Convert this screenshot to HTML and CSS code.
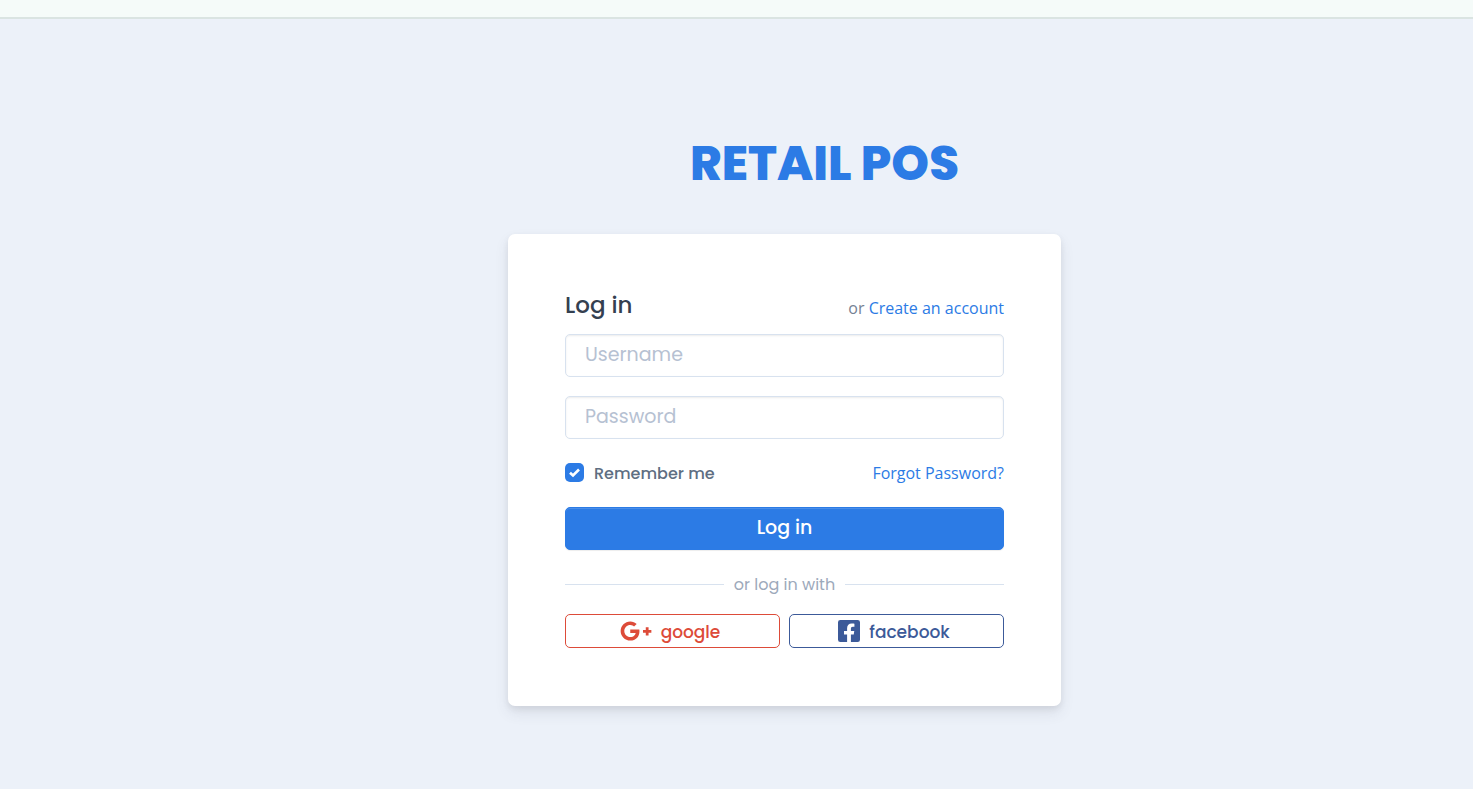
FILE: index.html
```html
<!DOCTYPE html>
<html lang="en">
<head>
<meta charset="utf-8">
<meta name="viewport" content="width=device-width, initial-scale=1">
<title>Retail POS - Log in</title>
<link rel="stylesheet" href="styles.css">
</head>
<body>
<div class="topbar"></div>
<main class="page">
  <h1 class="brand">RETAIL POS</h1>
  <form class="card">
    <div class="card-head">
      <h2 class="heading">Log in</h2>
      <p class="signup">or <a class="link" href="#">Create an account</a></p>
    </div>
    <input class="field" type="text" placeholder="Username" aria-label="Username">
    <input class="field" type="password" placeholder="Password" aria-label="Password">
    <div class="options">
      <label class="remember"><input class="check" type="checkbox" checked><span class="remember-text">Remember me</span></label>
      <a class="link" href="#">Forgot Password?</a>
    </div>
    <button class="submit" type="submit">Log in</button>
    <div class="divider"><span class="divider-text">or log in with</span></div>
    <div class="social">
      <button class="social-btn google" type="button">
        <svg class="icon-google" viewBox="0 0 640 512" aria-hidden="true"><path fill="currentColor" d="M386.061 228.496c1.834 9.692 3.143 19.384 3.143 31.956C389.204 370.205 315.599 448 204.8 448c-106.084 0-192-85.915-192-192s85.916-192 192-192c51.864 0 95.083 18.859 128.611 50.292l-52.126 50.03c-14.145-13.621-39.028-29.599-76.485-29.599-65.484 0-118.92 54.221-118.92 121.277 0 67.056 53.436 121.277 118.92 121.277 75.961 0 104.513-54.745 108.965-82.773H204.8v-66.009h181.261zm185.406 6.437V179.2h-56.001v55.733h-55.733v56.001h55.733v55.733h56.001v-55.733H627.2v-56.001h-55.733z"/></svg>
        <span class="social-text">google</span>
      </button>
      <button class="social-btn facebook" type="button">
        <svg class="icon-facebook" viewBox="0 0 448 512" aria-hidden="true"><path fill="currentColor" d="M400 32H48A48 48 0 0 0 0 80v352a48 48 0 0 0 48 48h137.250V327.690h-63V256h63v-54.640c0-62.150 37-96.480 93.670-96.480 27.140 0 55.520 4.840 55.520 4.840v61h-31.270c-30.810 0-40.420 19.120-40.420 38.730V256h68.780l-11 71.690h-57.780V480H400a48 48 0 0 0 48-48V80a48 48 0 0 0-48-48z"/></svg>
        <span class="social-text">facebook</span>
      </button>
    </div>
  </form>
</main>
</body>
</html>
```
FILE: styles.css
```css
* {
  box-sizing: border-box;
}

body {
  margin: 0;
  min-height: 100vh;
  background: #ecf1f9;
  color: #5e6e82;
  font: 16px/24px "Open Sans", sans-serif;
}

.topbar {
  height: 19px;
  background: #f5fbf9;
  border-bottom: 2px solid #dae4e2;
}

.page {
  display: flex;
  flex-direction: column;
  align-items: center;
  padding: 109px 0 40px 96px;
}

.brand {
  margin: 0 0 34px;
  padding-left: 80px;
  color: #2c7be5;
  font: 800 48px/72px Poppins, Inter, sans-serif;
}

.card {
  display: flex;
  flex-direction: column;
  width: 100%;
  max-width: 553px;
  padding: 56px 57px 58px;
  background: #fff;
  border-radius: 7px;
  box-shadow: 0 7px 14px 0 rgba(65, 69, 88, 0.1), 0 3px 6px 0 rgba(0, 0, 0, 0.07);
}

.card-head,
.options {
  display: flex;
  align-items: center;
  justify-content: space-between;
}

.card-head {
  margin-bottom: 14px;
}

.heading {
  margin: 0;
  color: #344050;
  font: 500 23px/30px Poppins, Inter, sans-serif;
}

.signup {
  margin: 0;
  padding-top: 6px;
  color: #748194;
}

.link {
  color: #2c7be5;
  text-decoration: none;
}

.field {
  width: 100%;
  height: 43px;
  margin: 0 0 19px;
  padding: 0 19px 2px;
  color: #344050;
  background: #fff;
  border: 1px solid #d8e2ef;
  border-radius: 5px;
  box-shadow: inset 0 1px 2px rgba(0, 0, 0, 0.075);
  font: 400 19px Poppins, Inter, sans-serif;
}

.field::placeholder {
  color: #b6c1d2;
  opacity: 1;
}

.options {
  margin: 1px 0 21px;
}

.remember {
  display: flex;
  align-items: center;
  gap: 10px;
  font: 500 16px/24px Poppins, Inter, sans-serif;
}

.remember-text {
  padding-top: 3px;
}

.check {
  appearance: none;
  width: 19px;
  height: 19px;
  margin: 0;
  border-radius: 5px;
  background: #fff;
  border: 1px solid #b6c1d2;
}

.check:checked {
  border: 0;
  background: #2c7be5 url("data:image/svg+xml,%3Csvg xmlns='http://www.w3.org/2000/svg' viewBox='0 0 19 19'%3E%3Cpath fill='none' stroke='white' stroke-width='2.600' d='m5 9.700 3 2.800 6-6'/%3E%3C/svg%3E") center / 100% no-repeat;
}

.submit {
  height: 43px;
  padding: 0 20px 2px;
  color: #fff;
  background: #2c7be5;
  border: 1px solid #2c7be5;
  border-radius: 5px;
  box-shadow: inset 0 1px 0 rgba(255, 255, 255, 0.15), 0 1px 1px rgba(0, 0, 0, 0.075);
  font: 500 19px Poppins, Inter, sans-serif;
}

.divider {
  display: flex;
  align-items: center;
  gap: 10px;
  margin: 21px 0 17px;
  color: #9da9bb;
  font: 400 16px/24px Poppins, Inter, sans-serif;
}

.divider-text {
  padding-top: 2px;
}

.divider::before,
.divider::after {
  content: "";
  flex: 1;
  height: 1px;
  background: #d8e2ef;
}

.social {
  display: grid;
  grid-template-columns: 1fr 1fr;
  gap: 9px;
}

.social-btn {
  display: flex;
  align-items: center;
  justify-content: center;
  gap: 9px;
  height: 34px;
  padding: 0 5px 1px 0;
  background: #fff;
  border: 1px solid currentColor;
  border-radius: 5px;
  font: 500 17px/24px Poppins, Inter, sans-serif;
}

.social-text {
  padding-top: 2px;
}

.google {
  color: #dd4b39;
}

.facebook {
  color: #3c5a99;
}

.icon-google {
  width: 32px;
  height: 26px;
}

.icon-facebook {
  width: 22px;
  height: 26px;
}
```
